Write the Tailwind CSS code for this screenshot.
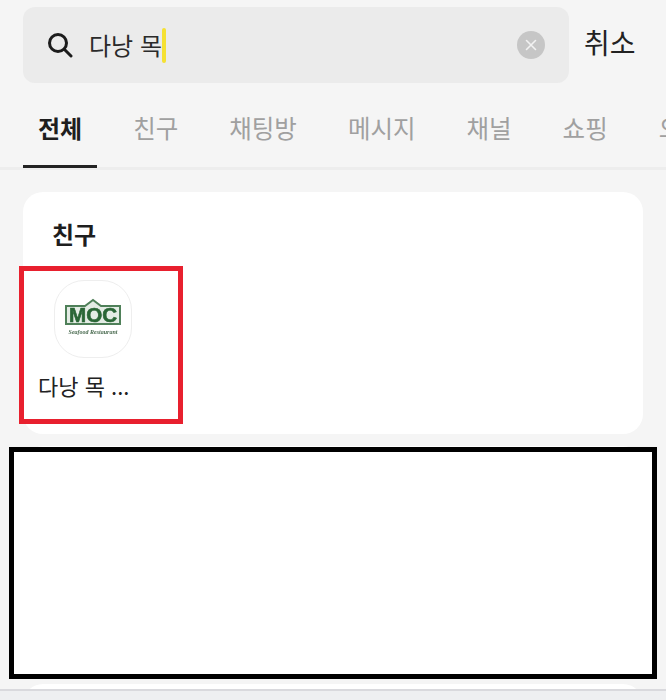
<!DOCTYPE html>
<html lang="ko">
<head>
    <meta charset="UTF-8">
    <meta name="viewport" content="width=device-width, initial-scale=1.0">
    <title>검색</title>
    <script src="https://cdn.jsdelivr.net/npm/@tailwindcss/browser@4"></script>
</head>

<body class="bg-[#f5f5f5] font-['Noto_Sans_CJK_KR',sans-serif]">

    <div class="relative flex flex-col h-[700px] overflow-hidden">

        <!-- Search row -->
        <div class="flex items-center pl-[23px] pt-[7px] h-[83px] shrink-0">
            <div class="flex items-center w-[546px] h-[76px] rounded-[12px] bg-[#ebebeb] pl-[24px] pr-[24px]">
                <svg class="w-[26px] h-[26px] shrink-0" viewBox="0 0 26 26" fill="none" stroke="#1c1c1c" stroke-width="3" stroke-linecap="round">
                    <circle cx="11" cy="11" r="8.5"/>
                    <path d="M17.5 17.5 L24 24"/>
                </svg>
                <span class="ml-[16px] text-[24px] leading-[36px] text-[#2a2a2a]">다낭 목</span>
                <span class="w-[4px] h-[35px] rounded-full bg-[#f5e133]"></span>
                <span class="ml-auto flex items-center justify-center w-[28px] h-[28px] rounded-full bg-[#c6c6c6]">
                    <svg class="w-[12px] h-[12px]" viewBox="0 0 12 12" stroke="#f2f2f2" stroke-width="1.6" stroke-linecap="round">
                        <path d="M1.5 1.5 L10.5 10.5 M10.5 1.5 L1.5 10.5"/>
                    </svg>
                </span>
            </div>
            <span class="ml-[15px] mb-[6px] text-[28px] leading-[36px] text-[#222222]">취소</span>
        </div>

        <!-- Tabs -->
        <div class="flex gap-[21px] pl-[23px] h-[87px] shrink-0 border-b-[3px] border-[#ededed] whitespace-nowrap text-[24.5px] text-[#a0a0a0]">
            <div class="relative flex items-center px-[15px] h-[85px] pt-[4px] text-[24px] font-bold text-[#1e1e1e]">
                전체
                <div class="absolute left-0 right-0 bottom-0 h-[3px] bg-[#222222]"></div>
            </div>
            <div class="flex items-center px-[15px] pt-[6px]">친구</div>
            <div class="flex items-center px-[15px] pt-[6px]">채팅방</div>
            <div class="flex items-center px-[15px] pt-[6px]">메시지</div>
            <div class="flex items-center px-[15px] pt-[6px]">채널</div>
            <div class="flex items-center px-[15px] pt-[6px]">쇼핑</div>
            <div class="flex items-center px-[15px] pt-[6px]">오픈채팅</div>
        </div>

        <!-- Results -->
        <div class="flex flex-col gap-[12px] flex-1 mx-[23px] mt-[22px]">
            <!-- Friends card -->
            <div class="relative h-[242px] shrink-0 rounded-[20px] bg-white">
                <h2 class="pl-[29px] pt-[24px] text-[24px] leading-[36px] font-bold text-[#1e1e1e]">친구</h2>
                <div class="ml-[31px] mt-[28px] flex items-center justify-center w-[78px] h-[78px] rounded-[30px] border border-[#eeeeee] bg-white">
                    <svg class="w-[60px] h-[44px] blur-[0.5px]" viewBox="0 0 60 44">
                        <path d="M3 9 H22 L30 3 L38 9 H57 V27 H3 Z" fill="#e4ece5" stroke="#4f8059" stroke-width="2"/>
                        <text x="6" y="25" font-family="Liberation Sans" font-size="20" font-weight="700" textLength="48" lengthAdjust="spacingAndGlyphs" fill="#2a6636" stroke="#2a6636" stroke-width="0.6">MOC</text>
                        <text x="30" y="37" text-anchor="middle" font-family="Liberation Serif" font-size="6" font-style="italic" font-weight="700" fill="#4a6b50">Seafood Restaurant</text>
                    </svg>
                </div>
                <p class="pl-[15px] mt-[10px] text-[22px] leading-[34px] text-[#222222]">다낭 목 ...</p>

                <!-- Red highlight -->
                <div class="absolute left-[-4px] top-[74px] w-[164px] h-[158px] border-[5px] border-[#e8202e]"></div>
            </div>

            <!-- Redacted card -->
            <div class="h-[226px] shrink-0 rounded-[20px] bg-white"></div>

            <!-- Next card, cut off by the bottom bar -->
            <div class="h-[5px] shrink-0 overflow-hidden">
                <div class="h-[40px] rounded-t-[20px] bg-white"></div>
            </div>
        </div>

        <!-- Black redaction box -->
        <div class="absolute left-[9px] top-[447px] w-[648px] h-[232px] border-[5px] border-black bg-white"></div>

        <!-- Bottom bar -->
        <div class="h-[11px] shrink-0 border-t-2 border-[#d9d9dd] bg-[#eeeff1]"></div>
    </div>

</body>
</html>
